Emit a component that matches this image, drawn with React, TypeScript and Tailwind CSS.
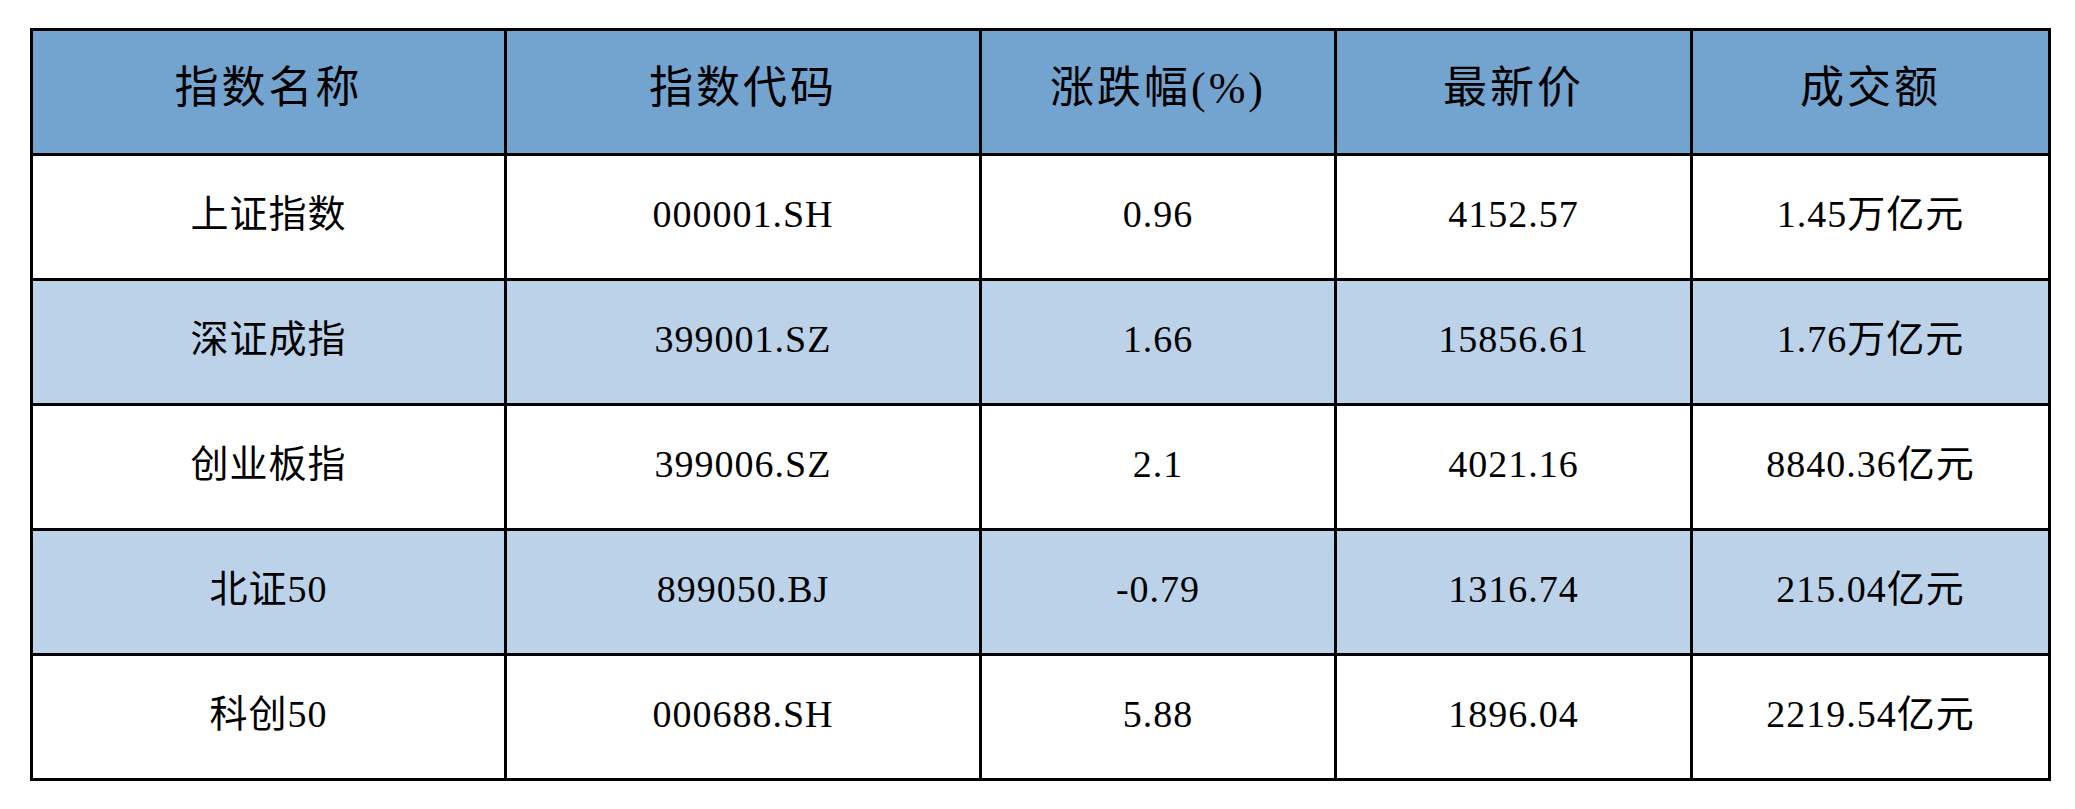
import * as React from 'react';

interface IndexRow {
  name: string;
  code: string;
  change: string;
  price: string;
  turnover: string;
}

const HEADERS = ['指数名称', '指数代码', '涨跌幅(%)', '最新价', '成交额'];

// column widths in px, left to right
const COL_WIDTHS = [474, 475, 355, 356, 358];

const ROWS: IndexRow[] = [
  { name: '上证指数', code: '000001.SH', change: '0.96', price: '4152.57', turnover: '1.45万亿元' },
  { name: '深证成指', code: '399001.SZ', change: '1.66', price: '15856.61', turnover: '1.76万亿元' },
  { name: '创业板指', code: '399006.SZ', change: '2.1', price: '4021.16', turnover: '8840.36亿元' },
  { name: '北证50', code: '899050.BJ', change: '-0.79', price: '1316.74', turnover: '215.04亿元' },
  { name: '科创50', code: '000688.SH', change: '5.88', price: '1896.04', turnover: '2219.54亿元' },
];

const FONT = "font-['Liberation_Serif','Noto_Sans_CJK_SC',serif]";

export default function App() {
  return (
    <div className="min-h-[809px] w-[2075px] bg-white pl-[30px] pt-[28px]">
      <table className={`table-fixed border-collapse text-black ${FONT}`}>
        <colgroup>
          {COL_WIDTHS.map((w, i) => (
            <col key={i} style={{ width: w }} />
          ))}
        </colgroup>
        <thead>
          <tr className="h-[125px] bg-[#73a4cf]">
            {HEADERS.map((h) => (
              <th
                key={h}
                className="border-[3px] border-black pb-[6px] text-center align-middle text-[44px] font-normal tracking-[3px]"
              >
                {h}
              </th>
            ))}
          </tr>
        </thead>
        <tbody>
          {ROWS.map((row, i) => (
            <tr key={row.code} className={i % 2 === 1 ? 'h-[125px] bg-[#bbd2e8]' : 'h-[125px] bg-white'}>
              {[row.name, row.code, row.change, row.price, row.turnover].map((cell, j) => (
                <td
                  key={j}
                  className="border-[3px] border-black pb-[6px] text-center align-middle text-[38px] leading-none tracking-[1px]"
                >
                  {cell}
                </td>
              ))}
            </tr>
          ))}
        </tbody>
      </table>
    </div>
  );
}
